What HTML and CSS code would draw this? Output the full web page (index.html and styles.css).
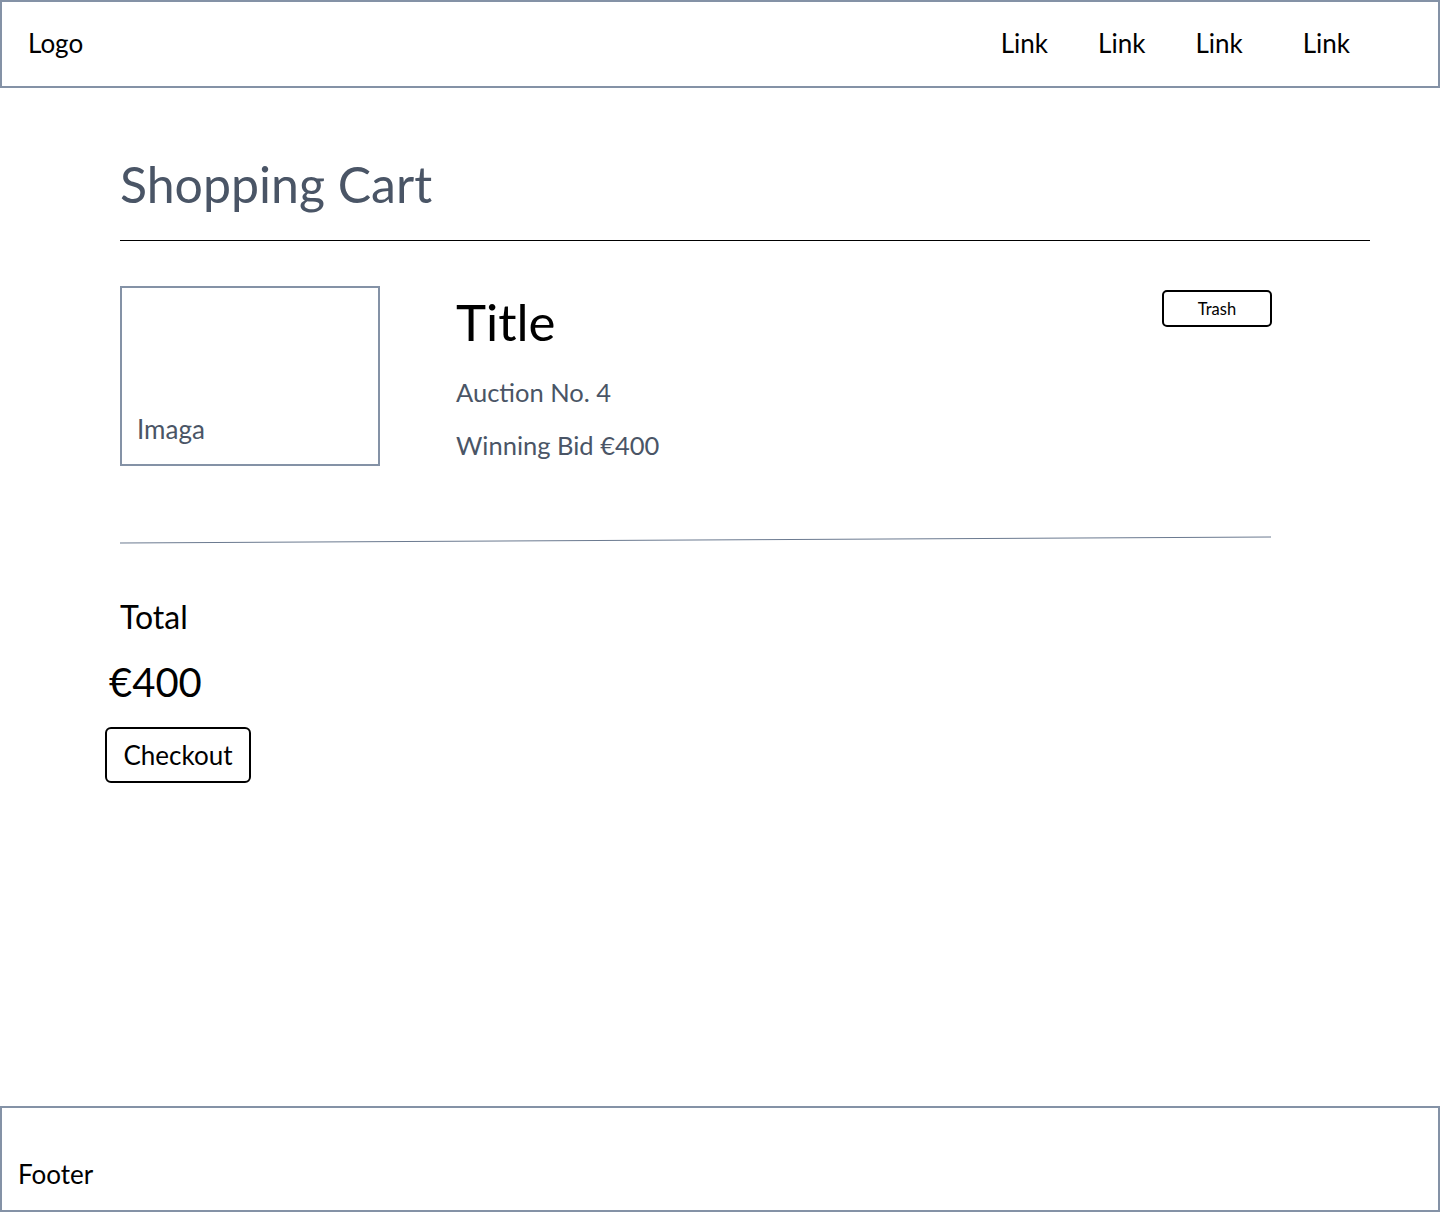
FILE: index.html
```html
<!DOCTYPE html>
<html lang="en">
<head>
<meta charset="utf-8">
<title>Shopping Cart</title>
<link rel="stylesheet" href="styles.css">
</head>
<body>
<header class="site-header">
  <div class="logo">Logo</div>
  <nav class="nav">
    <a class="nav-link" href="#">Link</a>
    <a class="nav-link" href="#">Link</a>
    <a class="nav-link" href="#">Link</a>
    <a class="nav-link nav-link-last" href="#">Link</a>
  </nav>
</header>
<main class="main">
  <h1 class="page-title">Shopping Cart</h1>
  <hr class="title-rule">
  <section class="cart-item">
    <div class="item-image"><span class="image-label">Imaga</span></div>
    <div class="item-info">
      <h2 class="item-title">Title</h2>
      <p class="item-meta">Auction No. 4</p>
      <p class="item-meta item-bid">Winning Bid €400</p>
    </div>
    <button class="trash-btn" type="button">Trash</button>
  </section>
  <svg class="item-rule" width="1152" height="8" viewBox="0 0 1152 8">
    <line x1="0" y1="7" x2="1151" y2="1" stroke="#6b7a90" stroke-width="1"/>
  </svg>
  <section class="summary">
    <div class="total-label">Total</div>
    <div class="total-value">€400</div>
    <button class="checkout-btn" type="button">Checkout</button>
  </section>
</main>
<footer class="site-footer">
  <div class="footer-text">Footer</div>
</footer>
</body>
</html>
```

FILE: styles.css
```css
* {
  box-sizing: border-box;
}

html, body {
  margin: 0;
  padding: 0;
}

body {
  font-family: Lato, "Noto Sans", "Liberation Sans", sans-serif;
  color: #000;
  background: #fff;
  min-height: 1212px;
  display: flex;
  flex-direction: column;
  line-height: 1.2;
}

.site-header {
  height: 88px;
  border: 2px solid #8492a6;
  display: flex;
  align-items: center;
  justify-content: space-between;
  padding: 0 0 0 26px;
}

.logo {
  font-size: 26px;
}

.nav {
  display: flex;
  align-items: center;
  padding-right: 88px;
}

.nav-link {
  font-size: 26px;
  color: #000;
  text-decoration: none;
  margin-left: 50px;
}

.nav-link:first-child {
  margin-left: 0;
}

.nav-link-last {
  margin-left: 60px;
}

.main {
  flex: 1;
  padding-left: 120px;
  display: flex;
  flex-direction: column;
  align-items: flex-start;
}

.page-title {
  margin: 66px 0 0 0;
  font-size: 50px;
  font-weight: 400;
  color: #4a5566;
  line-height: 1.2;
}

.title-rule {
  width: 1250px;
  margin: 26px 0 0 0;
  border: 0;
  border-top: 1px solid #000;
  height: 0;
}

.cart-item {
  width: 1152px;
  margin-top: 45px;
  display: flex;
  align-items: flex-start;
}

.item-image {
  width: 260px;
  height: 180px;
  border: 2px solid #8492a6;
  display: flex;
  align-items: flex-end;
  padding: 0 0 19px 15px;
}

.image-label {
  font-size: 26px;
  color: #4a5566;
}

.item-info {
  flex: 1;
  margin-left: 76px;
  padding-top: 5px;
}

.item-title {
  margin: 0;
  font-size: 51px;
  font-weight: 400;
  line-height: 1.2;
}

.item-meta {
  margin: 25px 0 0 0;
  font-size: 25.5px;
  color: #4a5566;
}

.item-bid {
  margin-top: 22px;
}

.trash-btn {
  margin-top: 4px;
  width: 110px;
  height: 37px;
  border: 2px solid #000;
  border-radius: 5px;
  background: #fff;
  font-family: inherit;
  font-size: 16.5px;
  color: #000;
  padding: 0;
}

.item-rule {
  display: block;
  margin-top: 70px;
}

.summary {
  display: flex;
  flex-direction: column;
  align-items: flex-start;
}

.total-label {
  margin-top: 54px;
  font-size: 32px;
}

.total-value {
  margin-top: 22px;
  margin-left: -11px;
  font-size: 40px;
}

.checkout-btn {
  margin-top: 21px;
  margin-left: -15px;
  width: 146px;
  height: 56px;
  border: 2px solid #000;
  border-radius: 6px;
  background: #fff;
  font-family: inherit;
  font-size: 26px;
  color: #000;
  padding: 0;
}

.site-footer {
  height: 106px;
  border: 2px solid #8492a6;
  padding: 51px 0 0 16px;
}

.footer-text {
  font-size: 26px;
}
```
